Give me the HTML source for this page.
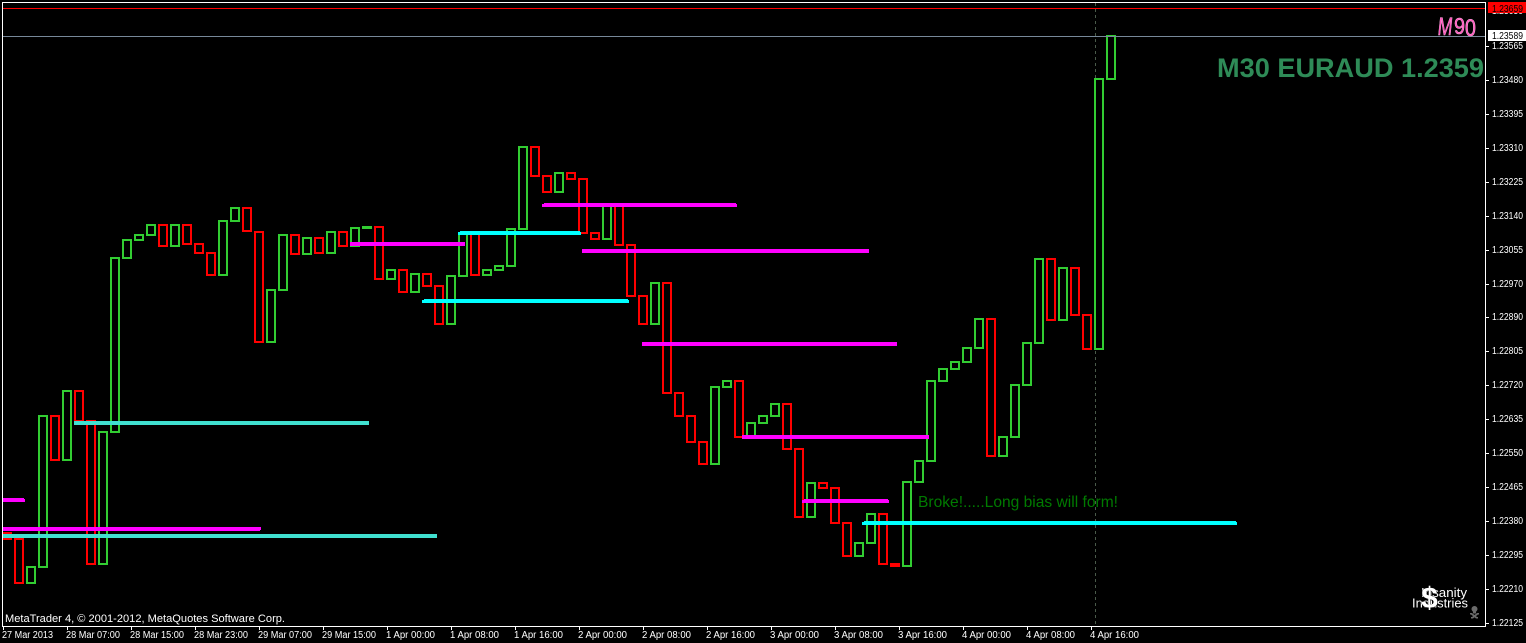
<!DOCTYPE html>
<html>
<head>
<meta charset="utf-8">
<title>M30 EURAUD</title>
<style>
html,body{margin:0;padding:0;background:#000;width:1526px;height:643px;overflow:hidden}
svg{display:block;position:absolute;left:0;top:0}
text{font-family:"Liberation Sans",sans-serif;white-space:pre}
.p text{font-size:10px;fill:#fff}
.t text{font-size:10px;fill:#fff}
</style>
</head>
<body>
<svg width="1526" height="643" viewBox="0 0 1526 643" xmlns="http://www.w3.org/2000/svg">
<rect width="1526" height="643" fill="#000"/>

<!-- crosshair period separator -->
<line x1="1095.5" y1="3" x2="1095.5" y2="626" stroke="#4a5a4a" stroke-width="1" stroke-dasharray="3 3" shape-rendering="crispEdges"/>

<!-- text labels under candles -->
<text x="918" y="507" font-size="16" fill="#007a00" textLength="200" lengthAdjust="spacingAndGlyphs">Broke!.....Long bias will form!</text>

<g shape-rendering="crispEdges" fill="none" stroke-width="2">
<path stroke="#ff0000" d="M3 533h8v6h-8zM15 539h8v44h-8zM51 416h8v44h-8zM75 391h8v30h-8zM87 421h8v143h-8zM159 225h8v21h-8zM183 225h8v19h-8zM195 244h8v9h-8zM207 253h8v22h-8zM243 208h8v23h-8zM255 232h8v110h-8zM291 235h8v19h-8zM315 238h8v15h-8zM339 232h8v14h-8zM375 227h8v52h-8zM399 270h8v22h-8zM423 274h8v12h-8zM435 286h8v38h-8zM471 233h8v42h-8zM531 147h8v29h-8zM543 176h8v16h-8zM567 173h8v6h-8zM579 179h8v54h-8zM591 233h8v6h-8zM615 206h8v39h-8zM627 245h8v51h-8zM639 296h8v28h-8zM663 283h8v110h-8zM675 393h8v23h-8zM687 416h8v26h-8zM699 442h8v22h-8zM735 381h8v56h-8zM783 404h8v45h-8zM795 449h8v68h-8zM819 483h8v5h-8zM831 488h8v35h-8zM843 523h8v33h-8zM879 514h8v50h-8zM891 564h8v2h-8zM987 319h8v137h-8zM1047 259h8v61h-8zM1071 268h8v47h-8zM1083 315h8v34h-8z"/>
<path stroke="#32cd32" d="M27 567h8v16h-8zM39 416h8v151h-8zM63 391h8v69h-8zM99 432h8v132h-8zM111 258h8v174h-8zM123 240h8v18h-8zM135 235h8v5h-8zM147 225h8v10h-8zM171 225h8v21h-8zM219 221h8v54h-8zM231 208h8v13h-8zM267 290h8v52h-8zM279 235h8v55h-8zM303 238h8v16h-8zM327 232h8v21h-8zM351 228h8v18h-8zM363 227h8v1h-8zM387 270h8v9h-8zM411 274h8v18h-8zM447 276h8v48h-8zM459 233h8v43h-8zM483 270h8v5h-8zM495 266h8v4h-8zM507 229h8v37h-8zM519 147h8v82h-8zM555 173h8v19h-8zM603 206h8v33h-8zM651 283h8v41h-8zM711 387h8v77h-8zM723 381h8v6h-8zM747 423h8v14h-8zM759 416h8v7h-8zM771 404h8v12h-8zM807 483h8v34h-8zM855 543h8v13h-8zM867 514h8v29h-8zM903 482h8v84h-8zM915 461h8v21h-8zM927 381h8v80h-8zM939 369h8v12h-8zM951 362h8v7h-8zM963 348h8v14h-8zM975 319h8v29h-8zM999 437h8v19h-8zM1011 385h8v52h-8zM1023 343h8v42h-8zM1035 259h8v84h-8zM1059 268h8v52h-8zM1095 79h8v270h-8zM1107 36h8v43h-8z"/>
</g>

<!-- trend lines -->
<g shape-rendering="crispEdges">
<g fill="#ff00ff">
<rect x="3" y="498" width="21" height="1"/><rect x="3" y="499" width="22" height="3"/>
<rect x="3" y="527" width="258" height="3"/><rect x="3" y="530" width="257" height="1"/>
<rect x="350" y="242" width="115" height="4"/>
<rect x="544" y="203" width="192" height="1"/><rect x="542" y="204" width="195" height="3"/>
<rect x="582" y="249" width="287" height="4"/>
<rect x="642" y="342" width="255" height="4"/>
<rect x="742" y="435" width="187" height="4"/>
<rect x="804" y="499" width="84" height="1"/><rect x="802" y="500" width="87" height="3"/>
</g>
<g fill="#40e0d0">
<rect x="3" y="534" width="434" height="4"/>
<rect x="74" y="421" width="295" height="4"/>
</g>
<g fill="#00ffff">
<rect x="460" y="231" width="120" height="1"/><rect x="458" y="232" width="123" height="3"/>
<rect x="424" y="299" width="204" height="1"/><rect x="422" y="300" width="207" height="3"/>
<rect x="864" y="521" width="372" height="1"/><rect x="862" y="522" width="375" height="3"/>
</g>
</g>

<!-- frame -->
<g shape-rendering="crispEdges">
<rect x="2" y="8" width="1483" height="1" fill="#ff0000"/>
<rect x="2" y="36" width="1483" height="1" fill="#778899"/>
<rect x="2" y="2" width="1484" height="1" fill="#fff"/>
<rect x="2" y="2" width="1" height="625" fill="#fff"/>
<rect x="1485" y="2" width="1" height="625" fill="#fff"/>
<rect x="2" y="626" width="1484" height="1" fill="#fff"/>
<g fill="#fff">
<rect x="1486" y="46" width="3" height="1"/><rect x="1486" y="80" width="3" height="1"/><rect x="1486" y="114" width="3" height="1"/><rect x="1486" y="148" width="3" height="1"/><rect x="1486" y="182" width="3" height="1"/><rect x="1486" y="216" width="3" height="1"/><rect x="1486" y="250" width="3" height="1"/><rect x="1486" y="284" width="3" height="1"/><rect x="1486" y="317" width="3" height="1"/><rect x="1486" y="351" width="3" height="1"/><rect x="1486" y="385" width="3" height="1"/><rect x="1486" y="419" width="3" height="1"/><rect x="1486" y="453" width="3" height="1"/><rect x="1486" y="487" width="3" height="1"/><rect x="1486" y="521" width="3" height="1"/><rect x="1486" y="555" width="3" height="1"/><rect x="1486" y="589" width="3" height="1"/><rect x="1486" y="623" width="3" height="1"/>
<rect x="3" y="627" width="1" height="3"/><rect x="67" y="627" width="1" height="3"/><rect x="131" y="627" width="1" height="3"/><rect x="195" y="627" width="1" height="3"/><rect x="259" y="627" width="1" height="3"/><rect x="323" y="627" width="1" height="3"/><rect x="387" y="627" width="1" height="3"/><rect x="451" y="627" width="1" height="3"/><rect x="515" y="627" width="1" height="3"/><rect x="579" y="627" width="1" height="3"/><rect x="643" y="627" width="1" height="3"/><rect x="707" y="627" width="1" height="3"/><rect x="771" y="627" width="1" height="3"/><rect x="835" y="627" width="1" height="3"/><rect x="899" y="627" width="1" height="3"/><rect x="963" y="627" width="1" height="3"/><rect x="1027" y="627" width="1" height="3"/><rect x="1091" y="627" width="1" height="3"/>
</g>
</g>

<!-- price axis -->
<g class="p">
<text x="1492" y="14" textLength="31" lengthAdjust="spacingAndGlyphs">1.23650</text>
<text x="1492" y="49" textLength="31" lengthAdjust="spacingAndGlyphs">1.23565</text>
<text x="1492" y="83" textLength="31" lengthAdjust="spacingAndGlyphs">1.23480</text>
<text x="1492" y="117" textLength="31" lengthAdjust="spacingAndGlyphs">1.23395</text>
<text x="1492" y="151" textLength="31" lengthAdjust="spacingAndGlyphs">1.23310</text>
<text x="1492" y="185" textLength="31" lengthAdjust="spacingAndGlyphs">1.23225</text>
<text x="1492" y="219" textLength="31" lengthAdjust="spacingAndGlyphs">1.23140</text>
<text x="1492" y="253" textLength="31" lengthAdjust="spacingAndGlyphs">1.23055</text>
<text x="1492" y="287" textLength="31" lengthAdjust="spacingAndGlyphs">1.22970</text>
<text x="1492" y="320" textLength="31" lengthAdjust="spacingAndGlyphs">1.22890</text>
<text x="1492" y="354" textLength="31" lengthAdjust="spacingAndGlyphs">1.22805</text>
<text x="1492" y="388" textLength="31" lengthAdjust="spacingAndGlyphs">1.22720</text>
<text x="1492" y="422" textLength="31" lengthAdjust="spacingAndGlyphs">1.22635</text>
<text x="1492" y="456" textLength="31" lengthAdjust="spacingAndGlyphs">1.22550</text>
<text x="1492" y="490" textLength="31" lengthAdjust="spacingAndGlyphs">1.22465</text>
<text x="1492" y="524" textLength="31" lengthAdjust="spacingAndGlyphs">1.22380</text>
<text x="1492" y="558" textLength="31" lengthAdjust="spacingAndGlyphs">1.22295</text>
<text x="1492" y="592" textLength="31" lengthAdjust="spacingAndGlyphs">1.22210</text>
<text x="1492" y="626" textLength="31" lengthAdjust="spacingAndGlyphs">1.22125</text>
</g>
<rect x="1488" y="2" width="38" height="11" fill="#ff0000" shape-rendering="crispEdges"/>
<text x="1492" y="12" font-size="10" fill="#000" textLength="31" lengthAdjust="spacingAndGlyphs">1.23659</text>
<rect x="1488" y="30" width="38" height="11" fill="#fff" shape-rendering="crispEdges"/>
<text x="1492" y="39" font-size="10" fill="#000" textLength="31" lengthAdjust="spacingAndGlyphs">1.23589</text>

<!-- time axis -->
<g class="t">
<text x="2" y="638" textLength="51" lengthAdjust="spacingAndGlyphs">27 Mar 2013</text>
<text x="66" y="638" textLength="54" lengthAdjust="spacingAndGlyphs">28 Mar 07:00</text>
<text x="130" y="638" textLength="54" lengthAdjust="spacingAndGlyphs">28 Mar 15:00</text>
<text x="194" y="638" textLength="54" lengthAdjust="spacingAndGlyphs">28 Mar 23:00</text>
<text x="258" y="638" textLength="54" lengthAdjust="spacingAndGlyphs">29 Mar 07:00</text>
<text x="322" y="638" textLength="54" lengthAdjust="spacingAndGlyphs">29 Mar 15:00</text>
<text x="386" y="638" textLength="49" lengthAdjust="spacingAndGlyphs">1 Apr 00:00</text>
<text x="450" y="638" textLength="49" lengthAdjust="spacingAndGlyphs">1 Apr 08:00</text>
<text x="514" y="638" textLength="49" lengthAdjust="spacingAndGlyphs">1 Apr 16:00</text>
<text x="578" y="638" textLength="49" lengthAdjust="spacingAndGlyphs">2 Apr 00:00</text>
<text x="642" y="638" textLength="49" lengthAdjust="spacingAndGlyphs">2 Apr 08:00</text>
<text x="706" y="638" textLength="49" lengthAdjust="spacingAndGlyphs">2 Apr 16:00</text>
<text x="770" y="638" textLength="49" lengthAdjust="spacingAndGlyphs">3 Apr 00:00</text>
<text x="834" y="638" textLength="49" lengthAdjust="spacingAndGlyphs">3 Apr 08:00</text>
<text x="898" y="638" textLength="49" lengthAdjust="spacingAndGlyphs">3 Apr 16:00</text>
<text x="962" y="638" textLength="49" lengthAdjust="spacingAndGlyphs">4 Apr 00:00</text>
<text x="1026" y="638" textLength="49" lengthAdjust="spacingAndGlyphs">4 Apr 08:00</text>
<text x="1090" y="638" textLength="49" lengthAdjust="spacingAndGlyphs">4 Apr 16:00</text>
</g>

<!-- chart text -->
<text x="1217" y="77" font-size="27" font-weight="700" fill="#2e8b57" textLength="267" lengthAdjust="spacingAndGlyphs">M30 EURAUD 1.2359</text>
<text x="5" y="622" font-size="11" fill="#fff" textLength="280" lengthAdjust="spacingAndGlyphs">MetaTrader 4, © 2001-2012, MetaQuotes Software Corp.</text>

<!-- M90 handwritten -->
<g fill="#ff4fb8" stroke="#ffb0e4" stroke-width="0.5">
<text transform="translate(1437 35) skewX(-6) scale(0.74 1.05)" font-size="24">M</text>
<text transform="translate(1454 34) scale(0.9 1.05)" font-size="22">9</text>
<text transform="translate(1465 36) scale(0.98 1.18)" font-size="20">0</text>
</g>

<!-- logo -->
<text x="1421" y="597" font-size="13" fill="#fff" textLength="46" lengthAdjust="spacingAndGlyphs">Insanity</text>
<text x="1412" y="607.500" font-size="13" fill="#fff" textLength="56" lengthAdjust="spacingAndGlyphs">Industries</text>
<text x="1429.5" y="608" font-size="30" font-weight="700" fill="#fff" stroke="#000" stroke-width="0.5" paint-order="stroke" text-anchor="middle">$</text>

<!-- skull -->
<g fill="#6b6b6b">
<circle cx="1474.5" cy="609" r="3"/>
<rect x="1473" y="611" width="3" height="2.5"/>
<path d="M1470 613l2 0 5 4 1 0 0 1.500-2 0-5-4-1 0z"/>
<path d="M1479 613l-2 0-5 4-1 0 0 1.500 2 0 5-4 1 0z"/>
</g>
</svg>
</body>
</html>
